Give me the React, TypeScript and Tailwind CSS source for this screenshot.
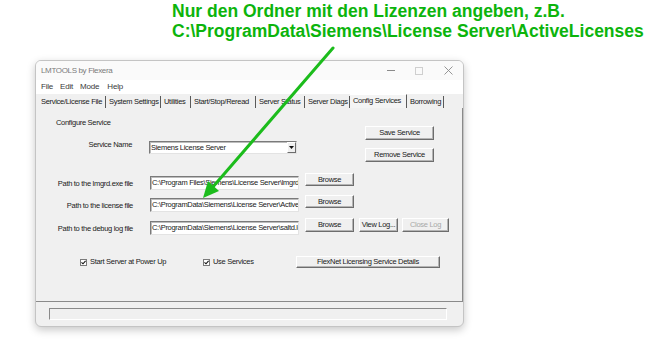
import React from "react";

const ui = "font-['Liberation_Sans',Arial,sans-serif]";
const small = "text-[7.5px] tracking-[-0.3px]";

function Btn({ className, children, disabled }: { className: string; children: React.ReactNode; disabled?: boolean }) {
  return (
    <div
      className={`${className} flex items-center justify-center whitespace-nowrap border border-t-white border-l-white border-r-[#6d6d6d] border-b-[#6d6d6d] bg-[#f0f0f0] shadow-[inset_-1px_-1px_0_#b4b4b4] ${small} leading-none ${
        disabled ? "text-[#a8a8a8]" : "text-[#1a1a1a]"
      }`}
    >
      {children}
    </div>
  );
}

function TextBox({ value, className }: { value: string; className: string }) {
  return (
    <div
      className={`${className} overflow-hidden whitespace-nowrap bg-white border border-[#7a7a7a] border-b-[#e3e3e3] border-r-[#e3e3e3] shadow-[inset_1px_1px_0_#bdbdbd] pl-[1px] leading-[12px] text-[#1a1a1a]`}
    >
      {value}
    </div>
  );
}

function Check({ label, className }: { label: string; className: string }) {
  return (
    <div className={`${className} flex items-center`}>
      <div className="w-[7px] h-[7px] border border-[#7a7a7a] bg-white flex items-center justify-center">
        <svg width="5" height="5" viewBox="0 0 5 5">
          <path d="M0.5 2.3 L2 3.8 L4.6 0.8" stroke="#111" strokeWidth="1.1" fill="none" />
        </svg>
      </div>
      <span className="ml-[3px] leading-none text-[#1a1a1a]">{label}</span>
    </div>
  );
}

const tabs = [
  { t: "Service/License File", w: "w-[69px] pl-[4px]" },
  { t: "System Settings", w: "w-[55px] pl-[3px]" },
  { t: "Utilities", w: "w-[30px] pl-[3px]" },
  { t: "Start/Stop/Reread", w: "w-[65px] pl-[3px]" },
  { t: "Server Status", w: "w-[49px] pl-[3px]" },
  { t: "Server Diags", w: "w-[45px] pl-[3px]" },
  { t: "Config Services", w: "w-[57px] pl-[3px]", active: true },
  { t: "Borrowing", w: "w-[37px] pl-[3px]" },
];

export default function App() {
  return (
    <div className="relative w-[670px] h-[358px] bg-white overflow-hidden">
      <div className="pl-[172px] pt-[1px] font-['Liberation_Sans',Arial,sans-serif] font-bold text-[17.5px] leading-[20px] text-[#0cb40c]">
        <div>Nur den Ordner mit den Lizenzen angeben, z.B.</div>
        <div>C:\ProgramData\Siemens\License Server\ActiveLicenses</div>
      </div>

      <div className={`ml-[35px] mt-[19px] w-[429px] h-[267px] rounded-[6px] border border-[#c4c4c4] bg-[#f0f0f0] shadow-[0_3px_9px_rgba(0,0,0,0.22)] overflow-hidden ${ui}`}>
        {/* title bar */}
        <div className="h-[19px] bg-[#fafafa] flex items-center pl-[5px]">
          <span className="text-[8px] tracking-[-0.35px] text-[#7a7a7a]">LMTOOLS by Flexera</span>
          <div className="ml-auto flex items-center h-full">
            <div className="w-[28px] flex justify-center">
              <div className="w-[8px] h-px bg-[#8a8a8a]" />
            </div>
            <div className="w-[28px] flex justify-center">
              <div className="w-[8px] h-[8px] border border-[#cfcfcf]" />
            </div>
            <div className="w-[30px] flex justify-center">
              <svg width="9" height="9" viewBox="0 0 9 9">
                <path d="M0.5 0.5 L8.5 8.5 M8.5 0.5 L0.5 8.5" stroke="#8a8a8a" strokeWidth="0.9" />
              </svg>
            </div>
          </div>
        </div>
        {/* menu bar */}
        <div className="h-[14px] bg-white flex items-center pl-[5px] text-[8px] tracking-[-0.2px] text-[#3a3a3a]">
          <span>File</span>
          <span className="ml-[7px]">Edit</span>
          <span className="ml-[7px]">Mode</span>
          <span className="ml-[8px]">Help</span>
        </div>
        {/* tabs */}
        <div className={`h-[14px] flex items-end pl-[1px] ${small} text-[#1a1a1a]`}>
          {tabs.map((tab) => (
            <div
              key={tab.t}
              className={`${tab.w} overflow-hidden whitespace-nowrap border-r border-[#5a5a5a] ${
                tab.active ? "h-[14px] leading-[11px] bg-[#f4f4f4] border-t border-t-white" : "h-[12px] leading-[12px]"
              }`}
            >
              {tab.t}
            </div>
          ))}
        </div>
        {/* panel */}
        <div className={`h-[194px] border-r border-b border-r-[#8a8a8a] border-b-[#8a8a8a] ${small} text-[#1a1a1a]`}>
          <div className="flex">
            <div className="w-[329px]">
              <div className="pl-[20px] pt-[9px] h-[23px] leading-[12px]">Configure Service</div>
              <div className="flex items-start h-[13px] mt-[10px]">
                <div className="w-[96px] text-right leading-[7px]">Service Name</div>
                <div className="ml-[17px] w-[148px] h-[13px] flex bg-white border border-[#7a7a7a] border-b-[#e3e3e3] border-r-[#e3e3e3] shadow-[inset_1px_1px_0_#bdbdbd]">
                  <span className="pl-[1px] leading-[11px]">Siemens License Server</span>
                  <div className="ml-auto w-[9px] h-full flex items-center justify-center border border-t-white border-l-white border-r-[#6d6d6d] border-b-[#6d6d6d] bg-[#f0f0f0]">
                    <svg width="5" height="3" viewBox="0 0 5 3">
                      <path d="M0 0 H5 L2.5 3 Z" fill="#111" />
                    </svg>
                  </div>
                </div>
              </div>
            </div>
            <div className="pt-[18px]">
              <Btn className="w-[69px] h-[14px]">Save Service</Btn>
              <Btn className="w-[69px] h-[14px] mt-[8px]">Remove Service</Btn>
            </div>
          </div>

          <div className="flex items-start h-[17px] mt-[11px]">
            <div className="w-[97px] text-right mt-[6px] leading-[10px]">Path to the lmgrd.exe file</div>
            <TextBox className="ml-[17px] mt-[3px] w-[149px] h-[14px]" value="C:\Program Files\Siemens\License Server\lmgrd.exe" />
            <Btn className="ml-[6px] w-[49px] h-[13px]">Browse</Btn>
          </div>
          <div className="flex items-start h-[17px] mt-[5px]">
            <div className="w-[97px] text-right mt-[6px] leading-[10px]">Path to the license file</div>
            <TextBox className="ml-[17px] mt-[3px] w-[149px] h-[14px]" value="C:\ProgramData\Siemens\License Server\ActiveLicenses" />
            <Btn className="ml-[6px] w-[49px] h-[13px]">Browse</Btn>
          </div>
          <div className="flex items-start h-[17px] mt-[6px]">
            <div className="w-[97px] text-right mt-[6px] leading-[10px]">Path to the debug log file</div>
            <TextBox className="ml-[17px] mt-[3px] w-[149px] h-[14px]" value="C:\ProgramData\Siemens\License Server\saltd.log" />
            <Btn className="ml-[6px] w-[49px] h-[14px]">Browse</Btn>
            <Btn className="ml-[5px] w-[39px] h-[14px]">View Log...</Btn>
            <Btn className="ml-[4px] w-[47px] h-[14px]" disabled>
              Close Log
            </Btn>
          </div>

          <div className="flex items-center h-[14px] mt-[20px]">
            <Check className="ml-[44px] w-[123px]" label="Start Server at Power Up" />
            <Check className="w-[93px]" label="Use Services" />
            <Btn className="w-[144px] h-[12px]">FlexNet Licensing Service Details</Btn>
          </div>
        </div>
        {/* status bar */}
        <div className="pt-[6px] pl-[13px]">
          <div className="w-[398px] h-[12px] border-t border-l border-[#8a8a8a] border-b border-r border-b-white border-r-white" />
        </div>
      </div>

      <svg className="absolute left-0 top-0 pointer-events-none" width="670" height="358" viewBox="0 0 670 358">
        <line x1="333" y1="48" x2="212" y2="188" stroke="#1cbc1c" strokeWidth="3" strokeLinecap="round" />
        <polygon points="203,198 219,191 208,181" fill="#1cbc1c" />
      </svg>
    </div>
  );
}
